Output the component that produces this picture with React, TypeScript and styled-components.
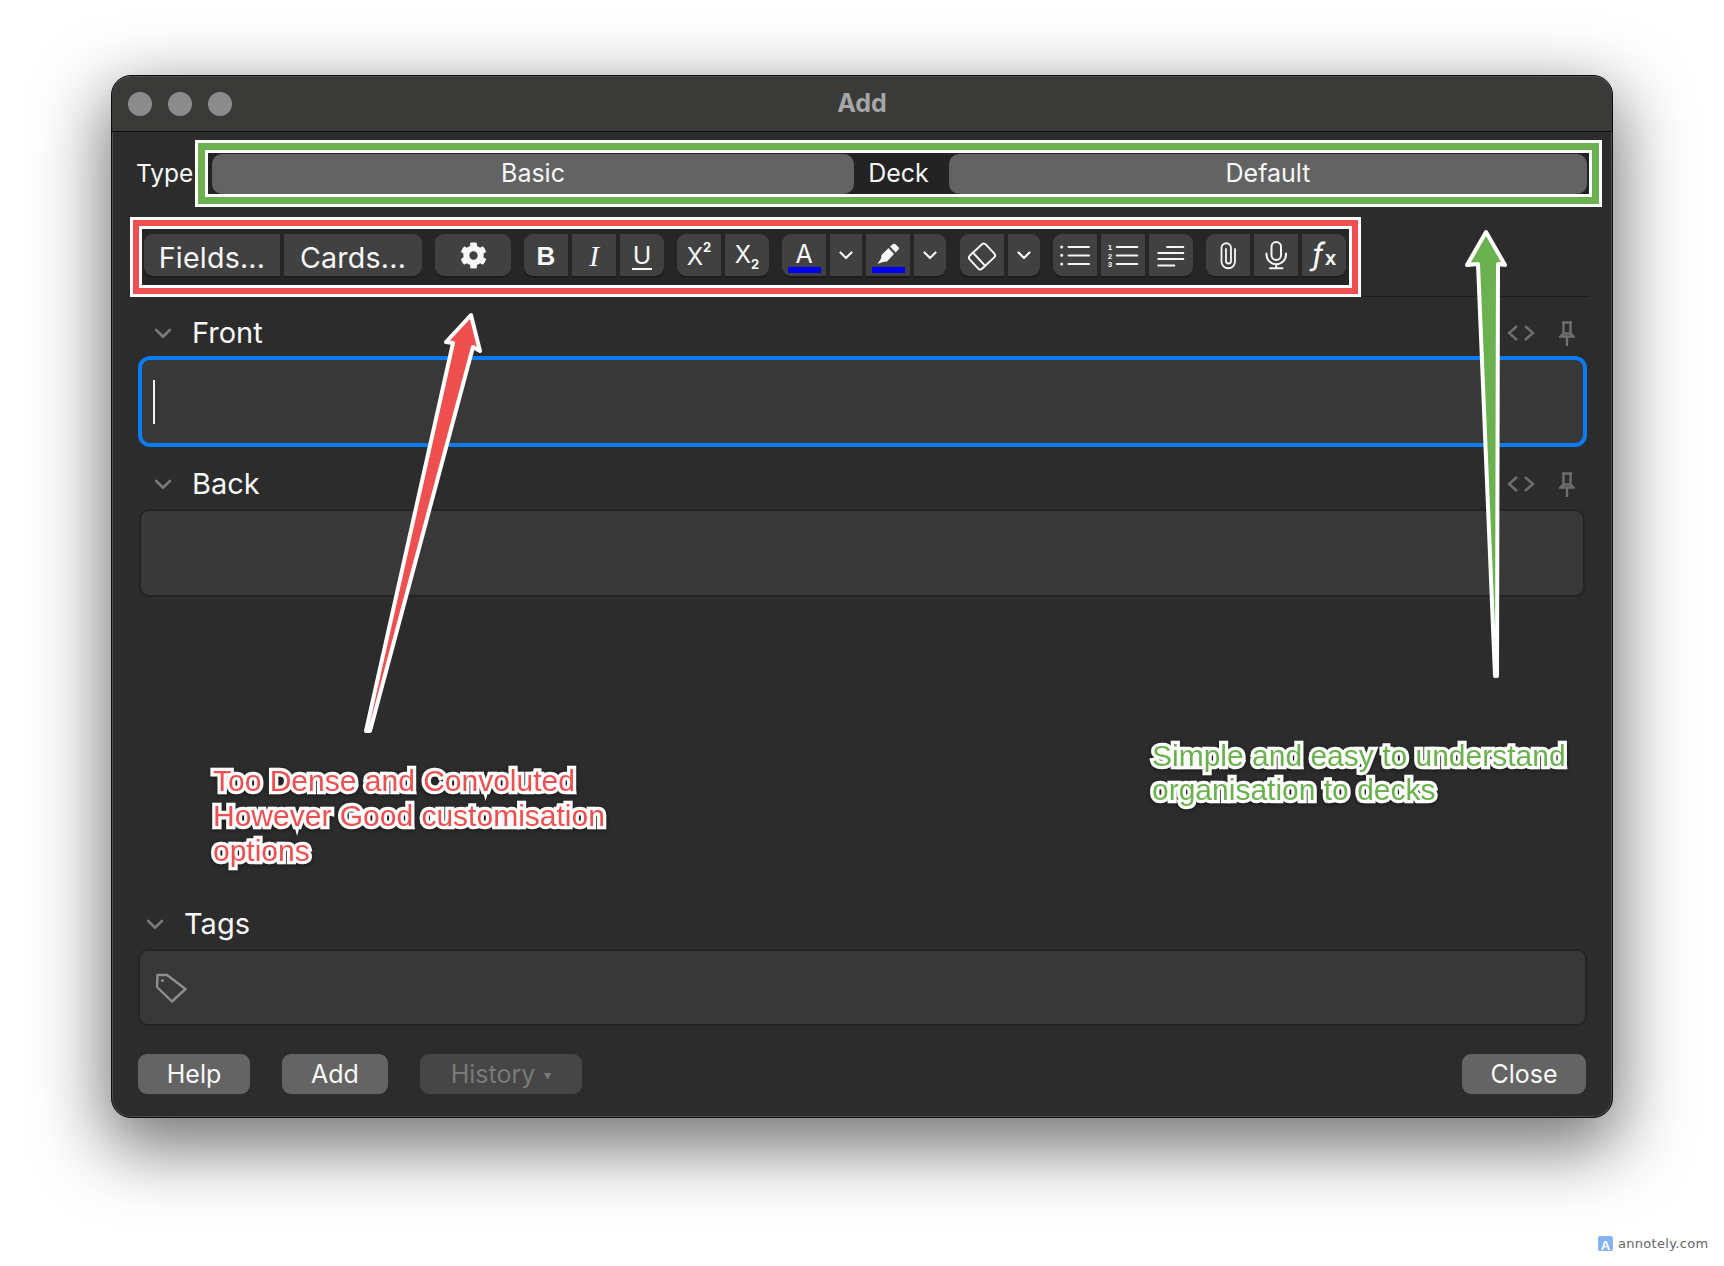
import { ReactNode } from "react";
import styled, { createGlobalStyle } from "styled-components";
import { FaCog } from "react-icons/fa";

const GlobalStyle = createGlobalStyle`
    html, body {
        margin: 0;
        background: #fff;
    }
    * {
        box-sizing: border-box;
    }
`;

const Page = styled.div`
    position: relative;
    width: 1724px;
    height: 1266px;
    padding: 75px 0 0 111px;
    overflow: hidden;
    font-family: Inter, "Liberation Sans", sans-serif;
`;

const Window = styled.div`
    position: relative;
    display: flex;
    flex-direction: column;
    width: 1502px;
    height: 1043px;
    background: #2c2c2c;
    border: 1px solid #0d0d0d;
    border-radius: 20px;
    box-shadow: 0 24px 70px 6px rgba(0, 0, 0, 0.55), inset 0 0 0 1px #4f4f4f;
    overflow: visible;
`;

const TitleBar = styled.div`
    position: relative;
    display: flex;
    align-items: center;
    justify-content: center;
    height: 56px;
    flex: none;
    background: #3a3a38;
    border-bottom: 1px solid #0f0f0f;
    border-radius: 19px 19px 0 0;
    box-shadow: inset 0 1px 0 #4f4f4f;
`;

const Lights = styled.div`
    position: absolute;
    left: 16px;
    top: 16px;
    display: flex;
    gap: 16px;
`;

const Light = styled.span`
    width: 24px;
    height: 24px;
    border-radius: 50%;
    background: #8c8c8c;
`;

const Title = styled.div`
    font-size: 25px;
    font-weight: 700;
    color: #a6a6a6;
    margin-bottom: 2px;
`;

const TypeRow = styled.div`
    display: flex;
    align-items: center;
    margin: 11px 13px 0 24px;
`;

const TypeLabel = styled.div`
    width: 61.5px;
    flex: none;
    padding-bottom: 2px;
    font-size: 24.5px;
    color: #f6f6f6;
`;

const GreenFrame = styled.div`
    flex: 1;
    display: flex;
    align-items: center;
    height: 61px;
    padding: 4px 5px 3px 7.5px;
    border: 7px solid #6cb14f;
    background: #232323;
    box-shadow: 0 0 0 3px #fff, inset 0 0 0 3px #fff;
`;

const Select = styled.div<{ $width: number }>`
    display: flex;
    align-items: center;
    justify-content: center;
    width: ${(p) => p.$width}px;
    height: 40px;
    flex: none;
    padding-bottom: 2px;
    background: #636363;
    border-radius: 10px;
    font-size: 25px;
    color: #f8f8f8;
`;

const DeckLabel = styled.div`
    flex: 1;
    padding: 0 6px 2px 0;
    text-align: center;
    font-size: 25px;
    color: #f6f6f6;
`;

const ToolbarRow = styled.div`
    margin: 16px 23px 0 21px;
    padding-bottom: 2px;
    border-bottom: 1px solid #1d1d1d;
`;

const RedFrame = styled.div`
    display: inline-flex;
    vertical-align: top;
    padding: 8px 6px 12px 5px;
    border: 6px solid #ef4f4f;
    background: #262626;
    box-shadow: 0 0 0 3px #fff, inset 0 0 0 3px #fff;
`;

const ToolGroup = styled.div<{ $gap?: number }>`
    display: flex;
    gap: 4px;
    margin-right: ${(p) => p.$gap ?? 13}px;

    &:last-child {
        margin-right: 0;
    }
`;

const ToolButton = styled.div<{ $width?: number }>`
    display: flex;
    align-items: center;
    justify-content: center;
    width: ${(p) => p.$width ?? 44}px;
    height: 42px;
    background: #414141;
    box-shadow: 0 2px 0 #1c1c1c;
    color: #f8f8f8;

    &:first-child {
        border-radius: 9px 0 0 9px;
    }
    &:last-child {
        border-radius: 0 9px 9px 0;
    }
    &:only-child {
        border-radius: 9px;
    }
`;

const ToolText = styled.span`
    padding-top: 4px;
    font-size: 28.6px;
    letter-spacing: 0.2px;
`;

const BoldLetter = styled.span`
    padding-top: 2px;
    font-family: "Liberation Sans", sans-serif;
    font-size: 26px;
    font-weight: 700;
`;

const ItalicLetter = styled.span`
    padding-top: 2px;
    font-family: "Liberation Serif", serif;
    font-size: 29px;
    font-style: italic;
`;

const UnderLetter = styled.span`
    margin-top: 3px;
    font-family: "Liberation Sans", sans-serif;
    font-size: 25px;
    line-height: 25px;
    border-bottom: 2px solid #f6f6f6;
    padding: 0 1px;
`;

const ScriptLetter = styled.span`
    display: flex;
    padding-top: 3px;
    font-size: 24px;
    font-weight: 400;
    line-height: 24px;
`;

const Small = styled.span<{ $low?: boolean }>`
    font-size: 13px;
    font-weight: 700;
    line-height: 13px;
    margin-top: ${(p) => (p.$low ? 15 : -4)}px;
`;

const ColorTool = styled(ToolButton)`
    flex-direction: column;
    justify-content: flex-end;
    padding-bottom: 3px;
    gap: 1px;
`;

const ColorLetter = styled.span`
    margin-bottom: -1px;
    font-size: 25px;
    line-height: 25px;
`;

const ColorBar = styled.span`
    width: 33px;
    height: 6px;
    background: #0000f0;
`;

const FxText = styled.span`
    display: flex;
    align-items: baseline;
    padding-top: 2px;
    font-size: 31px;
    line-height: 31px;
`;

const FxHook = styled.span`
    display: inline-block;
    transform: skewX(-10deg);
`;

const FxSmall = styled.span`
    font-family: "Liberation Sans", sans-serif;
    font-weight: 700;
    font-size: 20px;
    margin-left: 1px;
`;

const LabelRow = styled.div<{ $indent: number; $top: number }>`
    display: flex;
    align-items: center;
    height: 46px;
    margin: ${(p) => p.$top}px 25px 0 26px;
    padding: 0 12px 0 ${(p) => p.$indent}px;
`;

const LabelText = styled.div`
    flex: 1;
    margin-left: 19px;
    padding-bottom: 2px;
    font-size: 29px;
    color: #f8f8f8;
`;

const RowTools = styled.div`
    display: flex;
    align-items: center;
    gap: 24px;
`;

const FieldBox = styled.div<{ $focused?: boolean }>`
    display: flex;
    align-items: center;
    height: ${(p) => (p.$focused ? 91 : 88)}px;
    margin: ${(p) => (p.$focused ? "0 25px 0 26px" : "2px 27px 0 27px")};
    padding-left: 11px;
    background: #383838;
    border: ${(p) => (p.$focused ? "4px solid #0a7cf5" : "2px solid #242424")};
    border-radius: ${(p) => (p.$focused ? 12 : 10)}px;
`;

const Caret = styled.span`
    width: 2px;
    height: 44px;
    background: #f2f2f2;
`;

const Spacer = styled.div`
    flex: 1;
`;

const TagBox = styled.div`
    display: flex;
    align-items: center;
    height: 77px;
    margin: 2px 25px 28px 26px;
    padding-left: 15px;
    background: #383838;
    border: 2px solid #242424;
    border-radius: 10px;
`;

const Footer = styled.div`
    display: flex;
    gap: 32px;
    margin: 0 26px 23px 26px;
`;

const FooterButton = styled.div<{ $width: number; $disabled?: boolean; $push?: boolean }>`
    display: flex;
    align-items: center;
    justify-content: center;
    width: ${(p) => p.$width}px;
    height: 40px;
    margin-left: ${(p) => (p.$push ? "auto" : 0)};
    background: ${(p) => (p.$disabled ? "#464646" : "#646464")};
    border-radius: 9px;
    font-size: 25px;
    color: ${(p) => (p.$disabled ? "#7a7a7a" : "#f8f8f8")};
`;

const DropMark = styled.span`
    margin-left: 9px;
    font-size: 14px;
`;

const ArrowLayer = styled.svg`
    position: absolute;
    left: 0;
    top: 0;
    pointer-events: none;
`;

const Note = styled.div<{ $color: string; $left: number; $top: number; $leading: number }>`
    position: absolute;
    left: ${(p) => p.$left}px;
    top: ${(p) => p.$top}px;
    font-family: "Liberation Sans", sans-serif;
    font-size: 30px;
    line-height: ${(p) => p.$leading}px;
    white-space: pre;
    color: ${(p) => p.$color};
    -webkit-text-stroke: 6.5px #fff;
    paint-order: stroke fill;
    stroke-linejoin: round;
    filter: drop-shadow(0 1px 2px rgba(0, 0, 0, 0.45));
`;

const Badge = styled.div`
    position: absolute;
    left: 1595px;
    top: 1232px;
    display: flex;
    align-items: center;
    gap: 5px;
    width: 124px;
    height: 23px;
    padding-left: 3px;
    background: #fff;
    font-family: "DejaVu Sans", sans-serif;
    font-size: 13px;
    letter-spacing: 0.3px;
    color: #666;
`;

function Chevron({ color = "#f6f6f6", size = 16 }: { color?: string; size?: number }) {
    return (
        <svg width={size} height={size} viewBox="0 0 16 16" fill="none" stroke={color} strokeWidth="2.2" strokeLinecap="round" strokeLinejoin="round">
            <path d="M2.5 5.5 8 11l5.5-5.5" />
        </svg>
    );
}

function Icon({ children }: { children: ReactNode }) {
    return (
        <svg width="44" height="42" viewBox="0 0 44 42" fill="none" stroke="#f6f6f6" strokeWidth="2" strokeLinecap="round" strokeLinejoin="round">
            {children}
        </svg>
    );
}

function Marker() {
    return (
        <svg width="44" height="30" viewBox="0 0 44 30" fill="#f6f6f6">
            <g transform="translate(0 7)">
                <path d="M24 3.5 27 1q1-.8 2.5.3l3 3q1 1.3 0 2.3l-3 3z" />
                <path d="M22.5 5l5.5 6-7 7.5-4 .5-5.500 2 3.500-5.500.500-3.500z" />
            </g>
        </svg>
    );
}

function Field({ name, top, focused }: { name: string; top: number; focused?: boolean }) {
    return (
        <>
            <LabelRow $indent={15} $top={top}>
                <Chevron color="#7b7b7b" size={20} />
                <LabelText>{name}</LabelText>
                <RowTools>
                    <svg width="28" height="18" viewBox="0 0 28 18" fill="none" stroke="#6f6f6f" strokeWidth="2.4">
                        <path d="M10 2 2 9l8 7M18 2l8 7-8 7" />
                    </svg>
                    <svg width="16" height="25" viewBox="0 0 16 25" fill="none" stroke="#6f6f6f" strokeWidth="2.4">
                        <path d="M3 1.500h10M4.500 1.500v11M11.500 1.500v11M1.500 15.500h13L11.500 12.500h-7zM8 15.500V25" />
                    </svg>
                </RowTools>
            </LabelRow>
            <FieldBox $focused={focused}>{focused && <Caret />}</FieldBox>
        </>
    );
}

export default function App() {
    return (
        <Page>
            <GlobalStyle />
            <Window>
                <TitleBar>
                    <Lights>
                        <Light />
                        <Light />
                        <Light />
                    </Lights>
                    <Title>Add</Title>
                </TitleBar>

                <TypeRow>
                    <TypeLabel>Type</TypeLabel>
                    <GreenFrame>
                        <Select $width={642}>Basic</Select>
                        <DeckLabel>Deck</DeckLabel>
                        <Select $width={638}>Default</Select>
                    </GreenFrame>
                </TypeRow>

                <ToolbarRow>
                    <RedFrame>
                        <ToolGroup $gap={13}>
                            <ToolButton $width={136}><ToolText>Fields...</ToolText></ToolButton>
                            <ToolButton $width={138}><ToolText>Cards...</ToolText></ToolButton>
                        </ToolGroup>
                        <ToolGroup>
                            <ToolButton $width={76}><FaCog size={27} /></ToolButton>
                        </ToolGroup>
                        <ToolGroup>
                            <ToolButton><BoldLetter>B</BoldLetter></ToolButton>
                            <ToolButton><ItalicLetter>I</ItalicLetter></ToolButton>
                            <ToolButton><UnderLetter>U</UnderLetter></ToolButton>
                        </ToolGroup>
                        <ToolGroup>
                            <ToolButton><ScriptLetter>X<Small>2</Small></ScriptLetter></ToolButton>
                            <ToolButton><ScriptLetter>X<Small $low>2</Small></ScriptLetter></ToolButton>
                        </ToolGroup>
                        <ToolGroup $gap={14}>
                            <ColorTool><ColorLetter>A</ColorLetter><ColorBar /></ColorTool>
                            <ToolButton $width={32}><Chevron /></ToolButton>
                            <ColorTool><Marker /><ColorBar /></ColorTool>
                            <ToolButton $width={32}><Chevron /></ToolButton>
                        </ToolGroup>
                        <ToolGroup>
                            <ToolButton>
                                <Icon>
                                    <g transform="rotate(-43 22 22.500)">
                                        <rect x="11" y="13.500" width="22" height="18" rx="3" />
                                        <line x1="18" y1="13.500" x2="18" y2="31.500" />
                                    </g>
                                </Icon>
                            </ToolButton>
                            <ToolButton $width={32}><Chevron /></ToolButton>
                        </ToolGroup>
                        <ToolGroup>
                            <ToolButton>
                                <Icon>
                                    <circle cx="8.700" cy="13" r="1.500" fill="#f6f6f6" stroke="none" />
                                    <circle cx="8.700" cy="21.300" r="1.500" fill="#f6f6f6" stroke="none" />
                                    <circle cx="8.700" cy="30" r="1.500" fill="#f6f6f6" stroke="none" />
                                    <path d="M15.500 13H36M15.500 21.500H36M15.500 30H36" />
                                </Icon>
                            </ToolButton>
                            <ToolButton>
                                <Icon>
                                    <g fill="#f6f6f6" stroke="none" fontFamily="Liberation Sans" fontSize="8" fontWeight="700" textAnchor="middle">
                                        <text x="9" y="16">1</text>
                                        <text x="9" y="24.500">2</text>
                                        <text x="9" y="33">3</text>
                                    </g>
                                    <path d="M15.700 13h20.600M15.700 21.500h20.600M15.700 30h20.600" />
                                </Icon>
                            </ToolButton>
                            <ToolButton>
                                <Icon>
                                    <path d="M18 13h16.300M9.300 19h25M9.300 25h25M9.300 31.500h16" />
                                </Icon>
                            </ToolButton>
                        </ToolGroup>
                        <ToolGroup>
                            <ToolButton>
                                <Icon>
                                    <path d="M29 15v12.500a6.750 6.750 0 0 1-13.500 0V14a4.750 4.750 0 0 1 9.500 0v13a2.500 2.500 0 0 1-5 0V15" strokeWidth="1.800" />
                                </Icon>
                            </ToolButton>
                            <ToolButton>
                                <Icon>
                                    <rect x="17.500" y="8" width="9.500" height="18" rx="4.750" />
                                    <path d="M12.500 19.500v1a9.750 9.750 0 0 0 19.500 0v-1M22.250 30.500V34M16 34.300h12.500" />
                                </Icon>
                            </ToolButton>
                            <ToolButton><FxText><FxHook>ƒ</FxHook><FxSmall>x</FxSmall></FxText></ToolButton>
                        </ToolGroup>
                    </RedFrame>
                </ToolbarRow>

                <Field name="Front" top={13} focused />
                <Field name="Back" top={14} />

                <Spacer />

                <LabelRow $indent={7} $top={0}>
                    <Chevron color="#7b7b7b" size={20} />
                    <LabelText>Tags</LabelText>
                </LabelRow>
                <TagBox>
                    <svg width="32" height="30" viewBox="0 0 32 30" fill="none" stroke="#8f8f8f" strokeWidth="2.400" strokeLinejoin="round">
                        <path d="M2.500 2H12L30.500 16 17 28.500 2 14z" />
                        <circle cx="7.500" cy="7.500" r="1.600" fill="#8f8f8f" stroke="none" />
                    </svg>
                </TagBox>

                <Footer>
                    <FooterButton $width={112}>Help</FooterButton>
                    <FooterButton $width={106}>Add</FooterButton>
                    <FooterButton $width={162} $disabled>
                        History<DropMark>▾</DropMark>
                    </FooterButton>
                    <FooterButton $width={124} $push>Close</FooterButton>
                </Footer>

                <ArrowLayer width="1502" height="1043" viewBox="112 76 1502 1043">
                    <polygon
                        points="471,315 480,351 473,347 370,731 366,731 453,343 446,342"
                        fill="#ef4f4f"
                        stroke="#fff"
                        strokeWidth="4"
                        strokeLinejoin="round"
                    />
                    <polygon
                        points="1486,232 1505,265 1498,264 1497,676 1495,676 1478,264 1467,265"
                        fill="#6cb14f"
                        stroke="#fff"
                        strokeWidth="4"
                        strokeLinejoin="round"
                    />
                </ArrowLayer>

                <Note $color="#ef4f4f" $left={101} $top={687} $leading={35}>
                    {"Too Dense and Convoluted\nHowever Good customisation\noptions"}
                </Note>
                <Note $color="#6cb14f" $left={1040} $top={663} $leading={34}>
                    {"Simple and easy to understand\norganisation to decks"}
                </Note>
            </Window>

            <Badge>
                <svg width="15" height="15" viewBox="0 0 15 15">
                    <rect width="15" height="15" rx="2" fill="#86b2f5" />
                    <text x="7.500" y="13.500" fontFamily="Liberation Sans" fontSize="13" fontWeight="700" fill="#fff" textAnchor="middle">A</text>
                </svg>
                annotely.com
            </Badge>
        </Page>
    );
}
